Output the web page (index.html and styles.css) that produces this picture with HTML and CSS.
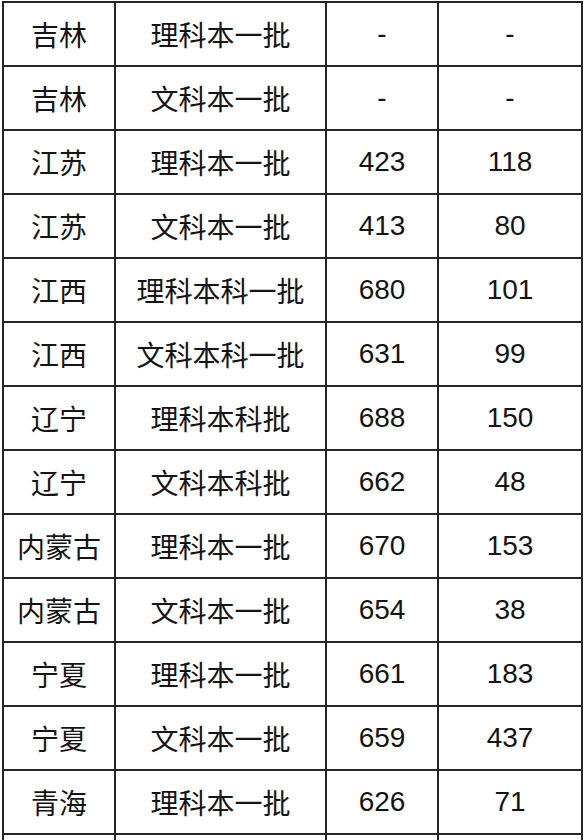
FILE: index.html
```html
<!DOCTYPE html>
<html lang="zh-CN">
<head>
<meta charset="utf-8">
<title>录取分数</title>
<link rel="stylesheet" href="styles.css">
</head>
<body>
<div class="score-table">
  <div class="cell">吉林</div><div class="cell">理科本一批</div><div class="cell">-</div><div class="cell">-</div>
  <div class="cell">吉林</div><div class="cell">文科本一批</div><div class="cell">-</div><div class="cell">-</div>
  <div class="cell">江苏</div><div class="cell">理科本一批</div><div class="cell">423</div><div class="cell">118</div>
  <div class="cell">江苏</div><div class="cell">文科本一批</div><div class="cell">413</div><div class="cell">80</div>
  <div class="cell">江西</div><div class="cell">理科本科一批</div><div class="cell">680</div><div class="cell">101</div>
  <div class="cell">江西</div><div class="cell">文科本科一批</div><div class="cell">631</div><div class="cell">99</div>
  <div class="cell">辽宁</div><div class="cell">理科本科批</div><div class="cell">688</div><div class="cell">150</div>
  <div class="cell">辽宁</div><div class="cell">文科本科批</div><div class="cell">662</div><div class="cell">48</div>
  <div class="cell">内蒙古</div><div class="cell">理科本一批</div><div class="cell">670</div><div class="cell">153</div>
  <div class="cell">内蒙古</div><div class="cell">文科本一批</div><div class="cell">654</div><div class="cell">38</div>
  <div class="cell">宁夏</div><div class="cell">理科本一批</div><div class="cell">661</div><div class="cell">183</div>
  <div class="cell">宁夏</div><div class="cell">文科本一批</div><div class="cell">659</div><div class="cell">437</div>
  <div class="cell">青海</div><div class="cell">理科本一批</div><div class="cell">626</div><div class="cell">71</div>
  <div class="cell"></div><div class="cell"></div><div class="cell"></div><div class="cell"></div>
</div>
</body>
</html>
```

FILE: styles.css
```css
html, body {
  margin: 0;
  padding: 0;
  background: #ffffff;
}

body {
  overflow: hidden;
}

.score-table {
  display: grid;
  grid-template-columns: 110px 209px 110px 142px;
  grid-auto-rows: 62px;
  gap: 2px;
  padding: 2px;
  margin: 1px 0 0 2px;
  width: max-content;
  background: #262626;
}

.cell {
  background: #ffffff;
  display: flex;
  align-items: center;
  justify-content: center;
  font-family: "Liberation Sans", "Noto Sans CJK SC", sans-serif;
  font-size: 28px;
  color: #141414;
  white-space: nowrap;
}
```
